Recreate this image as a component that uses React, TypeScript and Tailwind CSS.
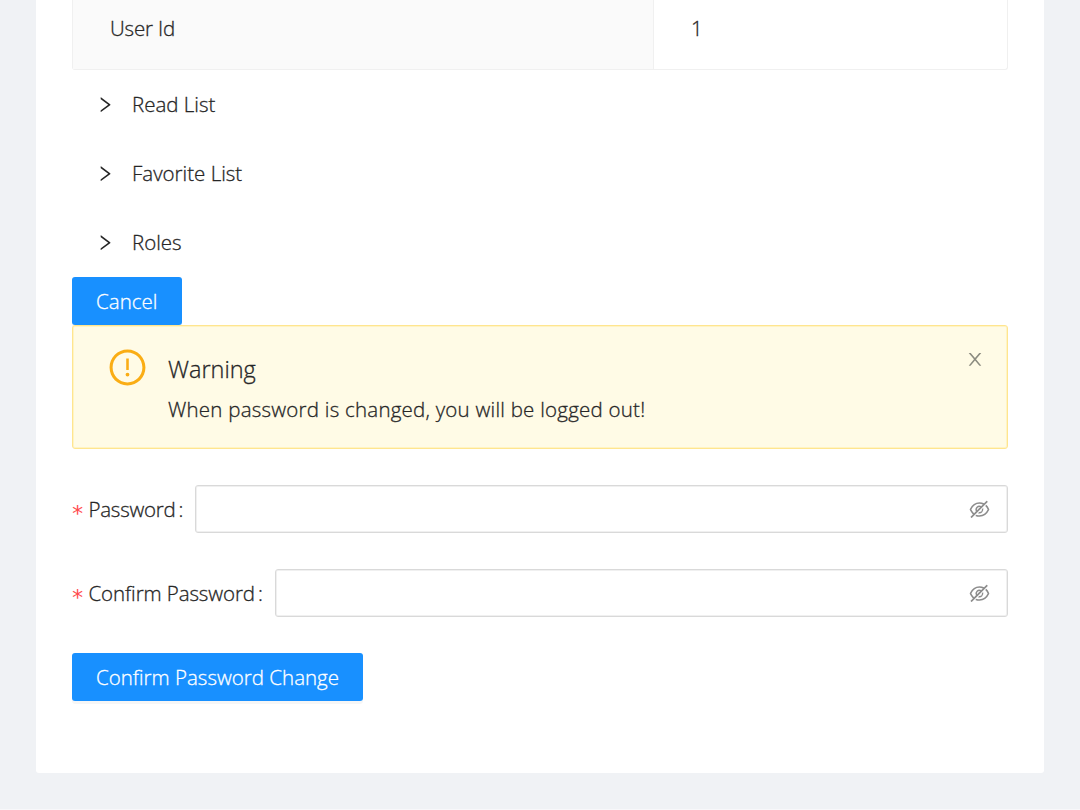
import type { ReactNode } from "react";
import {
  AiOutlineExclamationCircle,
  AiOutlineEyeInvisible,
} from "react-icons/ai";

function RightIcon() {
  return (
    <svg viewBox="0 0 1024 1024" className="h-5 w-[21px] fill-current" preserveAspectRatio="none">
      <path
        transform="translate(24 -18)"
        d="M765.7 486.8L314.9 134.7A7.97 7.97 0 0 0 302 141v77.3c0 4.9 2.3 9.6 6.1 12.6l360 281.1-360 281.1c-3.9 3-6.1 7.7-6.1 12.6V883c0 6.7 7.7 10.4 12.9 6.3l450.8-352.1a31.96 31.96 0 0 0 0-50.4z"
      />
    </svg>
  );
}

function CloseIcon() {
  return (
    <svg viewBox="0 0 1024 1024" className="size-5 fill-current">
      <path
        transform="translate(0 16)"
        d="M563.8 512l262.5-312.9c4.4-5.2.7-13.1-6.1-13.1h-79.8c-4.7 0-9.2 2.1-12.3 5.7L511.6 449.8 295.1 191.7c-3-3.6-7.5-5.7-12.3-5.7H203c-6.8 0-10.5 7.9-6.1 13.1L459.4 512 196.9 824.9A7.95 7.95 0 0 0 203 838h79.8c4.7 0 9.2-2.1 12.3-5.7l216.5-258.1 216.5 258.1c3 3.6 7.5 5.7 12.3 5.7h79.8c6.8 0 10.5-7.9 6.1-13.1L563.8 512z"
      />
    </svg>
  );
}

function Panel({ title }: { title: string }) {
  return (
    <div className="flex h-[69px] items-center pl-[22px]">
      <RightIcon />
      <span className="ml-[17px]">{title}</span>
    </div>
  );
}

function PrimaryButton({ children, width }: { children: ReactNode; width: string }) {
  return (
    <button
      className={`flex h-12 items-center justify-center rounded-[3px] bg-[#1890ff] text-white shadow-[0_3px_0_rgba(0,0,0,0.035)] ${width}`}
    >
      {children}
    </button>
  );
}

function PasswordField({ label, width, tracking }: { label: string; width: string; tracking: string }) {
  return (
    <div className="flex h-12 items-center">
      <div className={`flex shrink-0 items-center ${width}`}>
        <span className="-ml-px w-[17.5px] pt-2 font-['DejaVu_Sans_Mono',monospace] text-[22px] text-[#ff4d4f] [-webkit-text-stroke:0]">*</span>
        <span className={tracking}>{label}</span>
        <span className="ml-[3px]">:</span>
      </div>
      <div className="flex h-12 flex-1 items-center rounded-[3px] border border-[#d9d9d9] pr-4 shadow-[inset_0_0_0_1px_#f0f0f0]">
        <input type="password" className="h-full min-w-0 flex-1 bg-transparent pl-4 outline-none" />
        <AiOutlineEyeInvisible className="mt-px size-[23px] text-[#8c8c8c]" />
      </div>
    </div>
  );
}

export default function App() {
  return (
    <div className="h-[810px] overflow-hidden border-b border-[#f8f8fa] bg-[#f0f2f5] px-9 font-['Open_Sans','Noto_Sans',sans-serif] text-[20.5px] leading-[33px] font-light text-[#262626] [-webkit-text-stroke:0.3px]">
      <main className="h-[773px] rounded-b-[3px] bg-white px-9">
        <div className="flex h-[70px] rounded-b-[3px] border border-t-0 border-[#f0f0f0]">
          <div className="w-[581px] border-r border-[#f0f0f0] bg-[#fafafa] pt-3 pl-[37px] tracking-[-0.15px]">User Id</div>
          <div className="flex-1 pt-3 pl-[37px]">1</div>
        </div>
        <Panel title="Read List" />
        <Panel title="Favorite List" />
        <Panel title="Roles" />
        <PrimaryButton width="w-[109.5px]">Cancel</PrimaryButton>
        <div className="flex h-[124px] rounded-[3px] border border-[#ffe58f] bg-[#fffbe6] pl-[34px] shadow-[inset_0_0_0_1px_#fff4c4]">
          <AiOutlineExclamationCircle className="mt-[20.5px] size-[41px] shrink-0 text-[#faad14]" />
          <div className="ml-5 flex-1 pt-[25px]">
            <div className="text-[23.5px] leading-9">Warning</div>
            <div className="mt-[6px] tracking-[0.23px]">When password is changed, you will be logged out!</div>
          </div>
          <button className="mt-[23px] mr-[22px] h-5 text-[#8c8c80]">
            <CloseIcon />
          </button>
        </div>
        <form className="flex flex-col gap-9 pt-9">
          <PasswordField label="Password" width="w-[123px]" tracking="tracking-[-0.25px]" />
          <PasswordField label="Confirm Password" width="w-[203px]" tracking="tracking-[-0.1px]" />
          <PrimaryButton width="w-[291px]">Confirm Password Change</PrimaryButton>
        </form>
      </main>
    </div>
  );
}
